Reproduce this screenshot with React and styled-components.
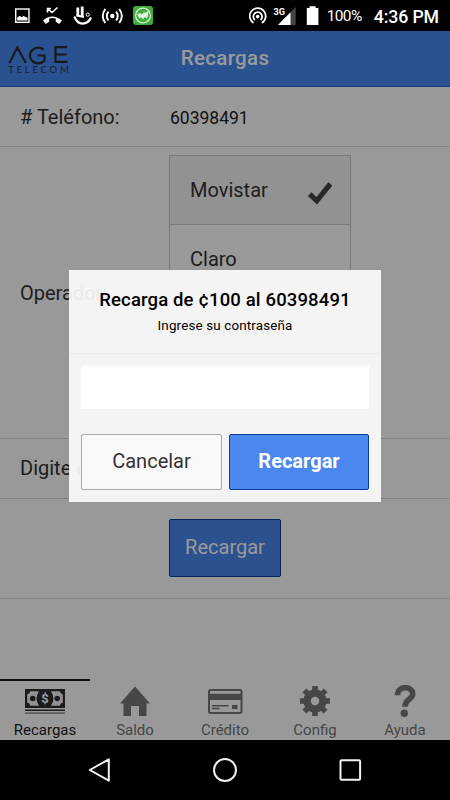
import { useState } from 'react';
import styled, { createGlobalStyle, css } from 'styled-components';

const GlobalStyle = createGlobalStyle`
	* {
		box-sizing: border-box;
	}
	body {
		margin: 0;
		background-color: #000;
		font-family: Roboto, "Liberation Sans", sans-serif;
	}
`;

const Screen = styled.div`
	width: 450px;
	height: 800px;
	display: flex;
	flex-direction: column;
	overflow: hidden;
	background-color: #000;
`;

const StatusBar = styled.div`
	height: 31px;
	padding: 0 11px 0 14px;
	display: flex;
	align-items: center;
	justify-content: space-between;
	color: #fff;
`;

const StatusGroup = styled.div`
	height: 31px;
	display: flex;
	align-items: center;
`;

const Battery = styled.span`
	margin-left: 7px;
	padding-top: 1px;
	font-size: 15.5px;
	letter-spacing: -0.6px;
`;

const Clock = styled.span`
	margin-left: 12px;
	padding-top: 2px;
	font-size: 17.7px;
	font-weight: 500;
	letter-spacing: -0.1px;
`;

const AppArea = styled.div`
	position: relative;
	height: 709px;
	display: flex;
	flex-direction: column;
	background-color: #fff;
`;

const Header = styled.header`
	height: 56px;
	display: grid;
	grid-template-columns: 80px 1fr 80px;
	align-items: center;
	background-color: #4688f0;
	border-bottom: 1px solid #2a62c0;
`;

const Logo = styled.div`
	padding: 2px 0 0 8px;
	line-height: 0;
`;

const Title = styled.h1`
	margin: 0;
	padding-bottom: 2px;
	font-size: 20.5px;
	line-height: 52px;
	font-weight: 500;
	letter-spacing: 0.35px;
	text-align: center;
	color: #fff;
`;

const Row = styled.div`
	height: ${(props) => props.$height}px;
	flex: none;
	display: flex;
	align-items: ${(props) => (props.$top ? 'flex-start' : 'center')};
	padding-bottom: ${(props) => props.$lift || 0}px;
	border-bottom: 1px solid #dcdcdc;
`;

const Label = styled.div`
	width: 169px;
	flex: none;
	align-self: center;
	padding-left: 20px;
	font-size: 20px;
	white-space: nowrap;
	color: #333;
`;

const Phone = styled.span`
	padding: 2px 0 0 1px;
	font-size: 17.5px;
	color: #222;
`;

const Options = styled.div`
	width: 182px;
	height: 276px;
	margin-top: 8px;
	border: 1px solid #ccc;
`;

const Option = styled.div`
	height: 69px;
	padding: 0 18px 1px 20px;
	display: flex;
	align-items: center;
	justify-content: space-between;
	border-bottom: 1px solid #ccc;
	font-size: 20px;
	color: #333;
	cursor: pointer;
	&:last-child {
		border-bottom: none;
	}
	${(props) => {
		if (props.$selected) {
			return css`
				background-color: #f3f3f3;
			`;
		}
	}}
	svg {
		margin-top: 8px;
	}
`;

const Button = styled.button`
	height: ${(props) => props.$height || 56}px;
	width: ${(props) => props.$width}px;
	padding: 0 0 2px;
	border: 1px solid #a9a9a9;
	border-radius: 2px;
	background-color: #f9f9f9;
	font-family: inherit;
	font-size: 20px;
	color: #333;
	cursor: pointer;
	${(props) => {
		if (props.$primary) {
			return css`
				border-color: #0c3c98;
				background-color: #4a87ee;
				color: #fff;
			`;
		}
	}}
	${(props) => {
		if (props.$bold) {
			return css`
				font-weight: 700;
			`;
		}
	}}
`;

const TabBar = styled.nav`
	height: 61px;
	margin-top: auto;
	display: grid;
	grid-template-columns: repeat(5, 1fr);
`;

const Tab = styled.div`
	display: flex;
	flex-direction: column;
	align-items: center;
	padding-top: 4px;
	border-top: 2px solid ${(props) => (props.$active ? '#111' : 'transparent')};
	color: ${(props) => (props.$active ? '#222' : '#777')};
	font-size: 15px;
	line-height: 18px;
	svg {
		margin-bottom: 4px;
	}
`;

const Backdrop = styled.div`
	position: absolute;
	inset: 0;
	background-color: rgba(0, 0, 0, 0.4);
`;

const Dialog = styled.div`
	position: absolute;
	top: 239px;
	left: 69px;
	width: 312px;
	height: 232px;
	background-color: rgba(252, 252, 252, 0.92);
`;

const DialogHead = styled.div`
	height: 84px;
	padding-top: 19px;
	border-bottom: 1px solid #ededed;
	text-align: center;
	color: #000;
`;

const DialogTitle = styled.h3`
	margin: 0;
	font-size: 18.5px;
	letter-spacing: 0.15px;
	line-height: 23px;
	font-weight: 500;
	white-space: nowrap;
`;

const DialogText = styled.div`
	margin-top: 5px;
	font-size: 13.4px;
	letter-spacing: 0.15px;
	line-height: 18px;
`;

const DialogBody = styled.div`
	padding: 12px 12px 0;
`;

const Password = styled.input`
	display: block;
	width: 288px;
	height: 43px;
	padding: 0 10px;
	border: none;
	outline: none;
	background-color: #fff;
	font-size: 16px;
`;

const DialogButtons = styled.div`
	margin-top: 25px;
	display: flex;
	justify-content: space-between;
`;

const NavBar = styled.div`
	height: 60px;
	padding: 0 87px;
	display: flex;
	align-items: center;
	justify-content: space-between;
`;

function LogoMark() {
	return (
		<svg width="64" height="32" viewBox="0 0 64 32">
			<g fill="none" stroke="#2b2b2b" strokeWidth="2.2">
				<path d="M1.3 19 L9.3 3.5 L17.8 19" />
				<path d="M35.8 5.6 A8.4 7.8 0 1 0 36.5 16.8 V11.5 H29.5" />
				<path d="M59 3.2 H47.5 V17.8 H59.5 M47.5 10.5 H58.5" />
			</g>
			<text x="0.3" y="29.2" fontFamily="Lato, Roboto, sans-serif" fontSize="9.6" textLength="60.5" fill="#29374f">
				TELECOM
			</text>
		</svg>
	);
}

function LeftStatusIcons() {
	return (
		<StatusGroup>
			<svg width="142" height="31" viewBox="14 0 142 31" fill="none" stroke="#fff">
				<rect x="15.7" y="9" width="13.3" height="13.3" strokeWidth="1.4" />
				<path d="M17.2 20.5 V17.5 L20 15.8 L21.5 17.2 L23.5 16 L27.5 17.8 V20.5 Z" fill="#fff" stroke="none" />
				<path d="M47.5 8.5 L52 12.5 L57.5 7.5 M47.5 12.5 V8.5 H51" strokeWidth="1.6" />
				<path
					d="M43 20.5 Q52 12.5 62 20.5 L59.2 24 L55.7 21.7 V18.6 Q52.3 17.5 49.2 18.6 V21.7 L45.7 24 Z"
					fill="#fff"
					stroke="none"
				/>
				<path d="M77.8 7.5 V16 M82.2 6.5 V16" strokeWidth="2.8" />
				<path d="M74.3 16.5 Q77 23.6 82.5 23.6 Q88.5 23.6 91 17.5" strokeWidth="2.2" />
				<path d="M76.5 15.5 L84 17" strokeWidth="2.2" />
				<circle cx="87.7" cy="14.7" r="1.6" strokeWidth="1" />
				<circle cx="112.3" cy="16" r="2.2" fill="#fff" stroke="none" />
				<path
					d="M108.5 11.5 Q105.2 16 108.5 20.5 M116.1 11.5 Q119.4 16 116.1 20.5 M105.3 9 Q100.2 16 105.3 23 M119.3 9 Q124.4 16 119.3 23"
					strokeWidth="1.9"
				/>
				<rect x="133" y="6" width="20" height="19" rx="3" fill="#3dad3c" stroke="none" />
				<circle cx="143" cy="15.5" r="7.4" stroke="#d9f2d5" strokeWidth="1.3" />
				<path
					d="M137 14 L141 13.2 L141 15 L144.5 11.8 L144.5 13.2 L149 10.5 L147 18.5 L144.5 17 L143.2 19.5 L141 17.2 L139.5 18.5 Z"
					fill="#e4f6e0"
					stroke="none"
				/>
			</svg>
		</StatusGroup>
	);
}

function RightStatusIcons() {
	return (
		<svg width="71" height="31" viewBox="251 0 71 31" fill="none">
			<g stroke="#fff" strokeWidth="1.8">
				<path d="M255.5 23 A8 8 0 1 1 263.9 23" />
				<path d="M256.9 20 A4.4 4.4 0 1 1 262.5 20" />
			</g>
			<circle cx="259.7" cy="16.6" r="1.8" fill="#fff" />
			<path d="M297.7 7 V25 H280 Z" fill="#454545" />
			<path d="M292.5 12.2 V25 H280 Z" fill="#fff" />
			<text
				x="275.5"
				y="14.5"
				fontFamily="Roboto, sans-serif"
				fontSize="9.5"
				fontWeight="700"
				textLength="11.5"
				lengthAdjust="spacingAndGlyphs"
				fill="#fff"
				stroke="#000"
				strokeWidth="2"
				paintOrder="stroke"
			>
				3G
			</text>
			<path d="M308.8 8 H311.6 V6.2 H317.6 V8 H320.4 V25 H308.8 Z" fill="#fff" />
		</svg>
	);
}

function CheckIcon() {
	return (
		<svg width="24" height="23" viewBox="0 0 24 23">
			<path d="M1.7 12.2 L8.8 18.8 L22.3 2" fill="none" stroke="#444" strokeWidth="5.2" />
		</svg>
	);
}

function MoneyIcon() {
	return (
		<svg width="40" height="32" viewBox="0 0 40 32">
			<path d="M0 4 H40 V23 H0 Z M0 24.5 H40 V26 H0 Z" fill="#303030" />
			<path d="M0 27.4 H40 V28.8 H0 Z" fill="#777" />
			<path
				d="M5.2 6.2 H14 Q9.2 13.5 14 20.8 H5.2 Q4.8 18.2 2.2 17.6 V9.4 Q4.8 8.8 5.2 6.2 Z M26 6.2 H34.8 Q35.2 8.8 37.8 9.4 V17.6 Q35.2 18.2 34.8 20.8 H26 Q30.8 13.5 26 6.2 Z"
				fill="#f4f4f4"
			/>
			<circle cx="7.7" cy="13.5" r="2.8" fill="#303030" />
			<circle cx="32.3" cy="13.5" r="2.8" fill="#303030" />
			<text x="20" y="18.2" textAnchor="middle" fontFamily="Roboto, sans-serif" fontSize="13" fontWeight="700" fill="#fff">
				$
			</text>
		</svg>
	);
}

function HomeIcon() {
	return (
		<svg width="30" height="32" viewBox="0 0 30 32">
			<path d="M15 1.5 L30 18.5 H26.5 V31 H19 V21 H11 V31 H3.5 V18.5 H0 Z" fill="#777" />
		</svg>
	);
}

function CardIcon() {
	return (
		<svg width="36" height="32" viewBox="0 0 36 32">
			<rect x="2" y="5" width="32.5" height="23" rx="1.5" fill="none" stroke="#777" strokeWidth="2" />
			<path d="M2 8.8 H34.5 V15 H2 Z M5 20 H21.5 V21.4 H5 Z M5 22.8 H12.5 V24.2 H5 Z M25 20 H30.5 V24 H25 Z" fill="#777" />
		</svg>
	);
}

function GearIcon() {
	return (
		<svg width="30" height="32" viewBox="0 0 30 32">
			<circle cx="15" cy="16" r="7.9" fill="none" stroke="#777" strokeWidth="7.4" />
			{[0, 45, 90, 135, 180, 225, 270, 315].map((angle) => (
				<path key={angle} d="M12.2 1 H17.8 V7 H12.2 Z" fill="#777" transform={`rotate(${angle} 15 16)`} />
			))}
		</svg>
	);
}

function HelpIcon() {
	return (
		<svg width="24" height="32" viewBox="0 0 24 32">
			<path
				d="M4.6 10.2 C4.4 .2 19.7 .6 19.7 8.8 C19.7 14.6 12 13.6 12 21.8"
				fill="none"
				stroke="#777"
				strokeWidth="5.6"
			/>
			<circle cx="11.3" cy="28.2" r="3.7" fill="#777" />
		</svg>
	);
}

const tabs = [
	{ name: 'Recargas', Icon: MoneyIcon },
	{ name: 'Saldo', Icon: HomeIcon },
	{ name: 'Crédito', Icon: CardIcon },
	{ name: 'Config', Icon: GearIcon },
	{ name: 'Ayuda', Icon: HelpIcon },
];

const operators = ['Movistar', 'Claro', 'Fullmóvil', ''];

function App() {
	const [operator, setOperator] = useState('Movistar');
	const [password, setPassword] = useState('');

	return (
		<>
			<GlobalStyle />
			<Screen>
				<StatusBar>
					<LeftStatusIcons />
					<StatusGroup>
						<RightStatusIcons />
						<Battery>100%</Battery>
						<Clock>4:36 PM</Clock>
					</StatusGroup>
				</StatusBar>
				<AppArea>
					<Header>
						<Logo>
							<LogoMark />
						</Logo>
						<Title>Recargas</Title>
					</Header>
					<Row $height={60}>
						<Label># Teléfono:</Label>
						<Phone>60398491</Phone>
					</Row>
					<Row $height={292} $top>
						<Label>Operador:</Label>
						<Options>
							{operators.map((name, idx) => (
								<Option key={idx} $selected={name === operator} onClick={() => setOperator(name)}>
									<span>{name}</span>
									{name === operator && <CheckIcon />}
								</Option>
							))}
						</Options>
					</Row>
					<Row $height={60} $lift={2}>
						<Label>Digite el</Label>
					</Row>
					<Row $height={100} $lift={2}>
						<Label />
						<Button $primary $width={112} $height={58}>
							Recargar
						</Button>
					</Row>
					<TabBar>
						{tabs.map(({ name, Icon }, idx) => (
							<Tab key={name} $active={idx === 0}>
								<Icon />
								<span>{name}</span>
							</Tab>
						))}
					</TabBar>
					<Backdrop />
					<Dialog>
						<DialogHead>
							<DialogTitle>Recarga de ¢100 al 60398491</DialogTitle>
							<DialogText>Ingrese su contraseña</DialogText>
						</DialogHead>
						<DialogBody>
							<Password type="password" value={password} onChange={(e) => setPassword(e.target.value)} />
							<DialogButtons>
								<Button $width={141}>Cancelar</Button>
								<Button $width={140} $primary $bold>
									Recargar
								</Button>
							</DialogButtons>
						</DialogBody>
					</Dialog>
				</AppArea>
				<NavBar>
					<svg width="24" height="26" viewBox="0 0 24 26" fill="none" stroke="#f2f2f2" strokeWidth="2">
						<path d="M21.8 2.3 V23.7 L2.8 13 Z" strokeLinejoin="round" />
					</svg>
					<svg width="26" height="26" viewBox="0 0 26 26" fill="none" stroke="#f2f2f2" strokeWidth="2">
						<circle cx="13" cy="13" r="11" />
					</svg>
					<svg width="24" height="26" viewBox="0 0 24 26" fill="none" stroke="#f2f2f2" strokeWidth="2">
						<rect x="1.5" y="3.2" width="19.6" height="19.6" rx="1" />
					</svg>
				</NavBar>
			</Screen>
		</>
	);
}

export default App;
